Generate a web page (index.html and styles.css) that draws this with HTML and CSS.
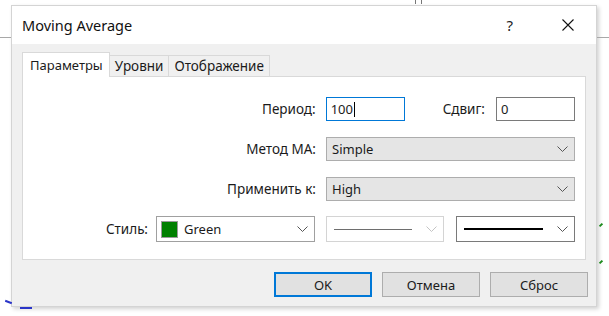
FILE: index.html
```html
<!DOCTYPE html>
<html lang="ru">
<head>
<meta charset="utf-8">
<title>Moving Average</title>
<link rel="stylesheet" href="styles.css">
</head>
<body>
<div class="backdrop">
  <div class="hline hline-left"></div>
  <div class="hline hline-right"></div>
  <div class="tick tick-a"></div>
  <div class="tick tick-b"></div>
  <div class="mark mark-blue1"></div>
  <div class="mark mark-blue2"></div>
  <div class="mark mark-green1"></div>
  <div class="mark mark-green2"></div>

  <div class="dialog">
    <div class="titlebar">
      <span class="title">Moving Average</span>
      <span class="help">?</span>
      <span class="close">
        <svg width="12" height="12" viewBox="0 0 12 12"><path d="M0.5 0.5 L11.5 11.5 M11.5 0.5 L0.5 11.5" stroke="#111" stroke-width="1.1" fill="none"/></svg>
      </span>
    </div>
    <div class="body">
      <div class="tabs">
        <div class="tab active">Параметры</div>
        <div class="tab">Уровни</div>
        <div class="tab">Отображение</div>
      </div>
      <div class="panel">
        <div class="row">
          <span class="label">Период:</span>
          <div class="input focused w79">100<span class="caret"></span></div>
          <span class="label label-shift">Сдвиг:</span>
          <div class="input w79">0</div>
        </div>
        <div class="row">
          <span class="label">Метод МА:</span>
          <div class="combo w249"><span class="combo-text">Simple</span><svg class="chev" width="11" height="6" viewBox="0 0 11 6"><path d="M0.5 0.5 L5.5 5.5 L10.5 0.5" stroke="#555" fill="none"/></svg></div>
        </div>
        <div class="row">
          <span class="label">Применить к:</span>
          <div class="combo w249"><span class="combo-text">High</span><svg class="chev" width="11" height="6" viewBox="0 0 11 6"><path d="M0.5 0.5 L5.5 5.5 L10.5 0.5" stroke="#555" fill="none"/></svg></div>
        </div>
        <div class="row row-style">
          <span class="label">Стиль:</span>
          <div class="pick w159"><span class="swatch"></span><span class="combo-text">Green</span><svg class="chev" width="11" height="6" viewBox="0 0 11 6"><path d="M0.5 0.5 L5.5 5.5 L10.5 0.5" stroke="#555" fill="none"/></svg></div>
          <div class="pick disabled w118"><span class="line thin"></span><svg class="chev" width="11" height="6" viewBox="0 0 11 6"><path d="M0.5 0.5 L5.5 5.5 L10.5 0.5" stroke="#c4c4c4" fill="none"/></svg></div>
          <div class="pick dark w119"><span class="line thick"></span><svg class="chev" width="11" height="6" viewBox="0 0 11 6"><path d="M0.5 0.5 L5.5 5.5 L10.5 0.5" stroke="#555" fill="none"/></svg></div>
        </div>
      </div>
      <div class="buttons">
        <div class="btn default">OK</div>
        <div class="btn">Отмена</div>
        <div class="btn">Сброс</div>
      </div>
    </div>
  </div>
</div>
</body>
</html>
```

FILE: styles.css
```css
html, body {
  margin: 0;
  padding: 0;
  background: #ffffff;
}
body {
  width: 609px;
  height: 316px;
  overflow: hidden;
  font-family: "Noto Sans", "Open Sans", sans-serif;
  color: #1b1b1b;
}
.backdrop {
  position: relative;
  width: 609px;
  height: 316px;
  padding: 5px 0 0 11px;
  box-sizing: border-box;
}
.hline {
  position: absolute;
  top: 37px;
  height: 1px;
  background: #a8a8a8;
}
.hline-left { left: 0; width: 11px; }
.hline-right { left: 597px; width: 12px; }
.tick {
  position: absolute;
  top: 0;
  width: 1px;
  height: 4px;
  background: #777;
}
.tick-a { left: 415px; }
.tick-b { left: 421px; }
.mark { position: absolute; height: 2px; }
.mark-blue1 { left: 5px; top: 301px; width: 7px; background: #2a35c8; transform: rotate(20deg); }
.mark-blue2 { left: 20px; top: 307px; width: 12px; background: #2a35c8; }
.mark-green1 { left: 599px; top: 224px; width: 4px; background: #1c8a1c; transform: rotate(-45deg); }
.mark-green2 { left: 599px; top: 261px; width: 4px; background: #1c8a1c; transform: rotate(-45deg); }

.dialog {
  width: 586px;
  height: 302px;
  background: #f0f0f0;
  border: 1px solid #d4d4d4;
  box-sizing: border-box;
  box-shadow: 2px 2px 4px rgba(0,0,0,0.18);
  display: flex;
  flex-direction: column;
}
.titlebar {
  height: 38px;
  background: #ffffff;
  display: flex;
  align-items: center;
  padding: 0 0 0 10px;
  flex-shrink: 0;
}
.title {
  font-size: 14.5px;
  color: #111;
  flex: 1;
}
.help {
  font-size: 15px;
  color: #222;
  margin-right: 49px;
}
.close {
  display: flex;
  margin-right: 22px;
}
.body {
  padding: 8px 10px 0 10px;
  display: flex;
  flex-direction: column;
}
.tabs {
  display: flex;
  align-items: flex-end;
  height: 24px;
  position: relative;
  z-index: 1;
}
.tab {
  font-size: 13.5px;
  height: 21px;
  line-height: 20px;
  padding: 0 5px 0 5px;
  border: 1px solid #d9d9d9;
  border-bottom: none;
  border-left: none;
  background: #f0f0f0;
  box-sizing: border-box;
  color: #1b1b1b;
}
.tab.active {
  font-size: 13px;
  height: 25px;
  line-height: 24px;
  margin-bottom: -1px;
  background: #ffffff;
  border-left: 1px solid #d9d9d9;
  padding: 0 6px 0 7px;
}
.panel {
  background: #ffffff;
  border: 1px solid #d9d9d9;
  height: 184px;
  box-sizing: border-box;
  padding: 20px 10px 0 0;
  display: flex;
  flex-direction: column;
  gap: 16px;
}
.row {
  display: flex;
  justify-content: flex-end;
  align-items: center;
  height: 24px;
}
.label {
  font-size: 13.5px;
  margin-right: 10px;
}
.label-shift {
  margin-left: 38px;
  margin-right: 11px;
}
.row-style .label { margin-right: 8px; }
.input {
  height: 24px;
  box-sizing: border-box;
  border: 1px solid #7a7a7a;
  background: #fff;
  font-size: 13px;
  line-height: 22px;
  padding-left: 4px;
  display: flex;
  align-items: center;
}
.input.focused { border-color: #0078d7; }
.caret {
  display: inline-block;
  width: 1px;
  height: 15px;
  background: #000;
  margin-left: 1px;
}
.w79 { width: 79px; }
.w249 { width: 249px; }
.w159 { width: 159px; }
.w118 { width: 118px; }
.w119 { width: 119px; }
.combo {
  height: 24px;
  box-sizing: border-box;
  border: 1px solid #adadad;
  background: #e5e5e5;
  display: flex;
  align-items: center;
  padding: 0 6px 0 5px;
}
.combo-text {
  font-size: 13px;
  flex: 1;
}
.chev { flex-shrink: 0; }
.pick {
  height: 26px;
  box-sizing: border-box;
  border: 1px solid #a0a0a0;
  background: #fff;
  display: flex;
  align-items: center;
  padding: 0 6px 0 4px;
  margin-left: 11px;
}
.row-style .label + .pick { margin-left: 0; }
.pick.disabled { border-color: #d4d4d4; margin-left: 11px; }
.pick.dark { border-color: #7a7a7a; margin-left: 12px; }
.swatch {
  width: 17px;
  height: 17px;
  background: #008000;
  border: 1px solid #9a9a9a;
  box-sizing: border-box;
  margin-right: 6px;
}
.line {
  flex: 1;
  margin: 0 14px 0 3px;
}
.line.thin { height: 1px; background: #6e6e6e; }
.line.thick { height: 2px; background: #000; }
.buttons {
  display: flex;
  justify-content: flex-end;
  gap: 10px;
  margin-top: 12px;
  margin-right: -2px;
}
.btn {
  width: 98px;
  height: 25px;
  box-sizing: border-box;
  border: 1px solid #adadad;
  background: #e1e1e1;
  font-size: 13px;
  display: flex;
  align-items: center;
  justify-content: center;
}
.btn.default {
  border: 2px solid #0078d7;
}
```
